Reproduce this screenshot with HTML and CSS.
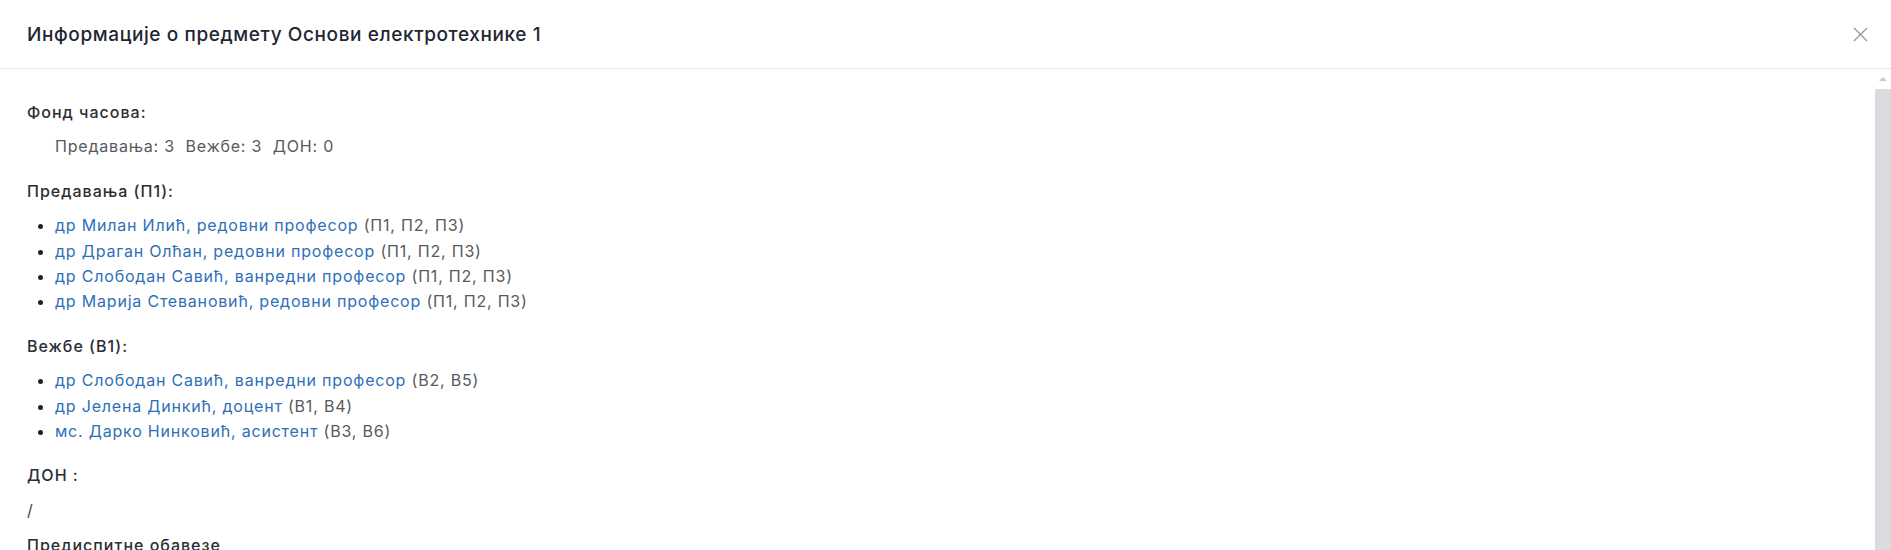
FILE: index.html
```html
<!DOCTYPE html>
<html lang="sr">
<head>
<meta charset="utf-8">
<title>Информације о предмету</title>
<link rel="stylesheet" href="styles.css">
</head>
<body>
<div class="modal">
  <header class="modal-header">
    <h1 class="modal-title">Информације о предмету Основи електротехнике 1</h1>
    <button class="close-btn" aria-label="Затвори">
      <svg width="15" height="15" viewBox="0 0 15 15"><path d="M1 1L14 14M14 1L1 14" stroke="#9a9a9a" stroke-width="1.4" fill="none"/></svg>
    </button>
  </header>
  <div class="modal-body">
    <div class="content">
      <section class="block">
        <h2 class="label">Фонд часова:</h2>
        <p class="hours">Предавања: 3&nbsp; Вежбе: 3&nbsp; ДОН: 0</p>
      </section>
      <section class="block">
        <h2 class="label">Предавања (П1):</h2>
        <ul class="people">
          <li><a href="#">др Милан Илић, редовни професор</a> (П1, П2, П3)</li>
          <li><a href="#">др Драган Олћан, редовни професор</a> (П1, П2, П3)</li>
          <li><a href="#">др Слободан Савић, ванредни професор</a> (П1, П2, П3)</li>
          <li><a href="#">др Марија Стевановић, редовни професор</a> (П1, П2, П3)</li>
        </ul>
      </section>
      <section class="block">
        <h2 class="label">Вежбе (В1):</h2>
        <ul class="people">
          <li><a href="#">др Слободан Савић, ванредни професор</a> (В2, В5)</li>
          <li><a href="#">др Јелена Динкић, доцент</a> (В1, В4)</li>
          <li><a href="#">мс. Дарко Нинковић, асистент</a> (В3, В6)</li>
        </ul>
      </section>
      <section class="block block-don">
        <h2 class="label">ДОН :</h2>
        <p class="plain">/</p>
      </section>
      <section class="block">
        <h2 class="label">Предиспитне обавезе</h2>
      </section>
    </div>
    <div class="scrollbar">
      <div class="scroll-arrow"></div>
      <div class="scroll-thumb"></div>
    </div>
  </div>
</div>
</body>
</html>
```

FILE: styles.css
```css
* { box-sizing: border-box; }
html, body {
  margin: 0;
  padding: 0;
  height: 100%;
  background: #ffffff;
  overflow: hidden;
}
body {
  font-family: Inter, "Noto Sans", "Liberation Sans", sans-serif;
  color: #555a61;
}
.modal {
  display: flex;
  flex-direction: column;
  height: 100%;
}
.modal-header {
  height: 69px;
  flex: none;
  display: flex;
  align-items: center;
  justify-content: space-between;
  padding: 0 22px 0 27px;
  border-bottom: 1px solid #e4e5e7;
}
.modal-title {
  margin: 0;
  font-size: 19px;
  font-weight: 500;
  color: #1f2633;
  letter-spacing: 0.6px;
}
.close-btn {
  border: 0;
  background: transparent;
  padding: 0;
  width: 17px;
  height: 17px;
  display: flex;
  align-items: center;
  justify-content: center;
  cursor: pointer;
}
.modal-body {
  flex: 1;
  display: flex;
  min-height: 0;
}
.content {
  flex: 1;
  padding: 31px 27px 0 27px;
  overflow: hidden;
  font-size: 16px;
  line-height: 25.4px;
  letter-spacing: 0.8px;
}
.block { margin-bottom: 19px; }
.block-don { margin-bottom: 10px; }
.label {
  margin: 0 0 9px 0;
  font-size: 16px;
  font-weight: 500;
  color: #2b2e33;
  letter-spacing: 1px;
}
.hours {
  margin: 0;
  padding-left: 28px;
  color: #555a61;
}
.plain {
  margin: 0;
  color: #444;
}
.people {
  margin: 0;
  padding-left: 28px;
}
.people li::marker { color: #222; }
.people a {
  color: #2f6fb8;
  text-decoration: none;
}
.scrollbar {
  width: 16px;
  flex: none;
  display: flex;
  flex-direction: column;
  align-items: stretch;
  background: #fff;
}
.scroll-arrow {
  height: 20px;
  display: flex;
  justify-content: center;
  padding-top: 8px;
}
.scroll-arrow::before {
  content: "";
  width: 0;
  height: 0;
  border-left: 4px solid transparent;
  border-right: 4px solid transparent;
  border-bottom: 4px solid #c8cacd;
}
.scroll-thumb {
  flex: 1;
  background: #dadbdf;
}
```
